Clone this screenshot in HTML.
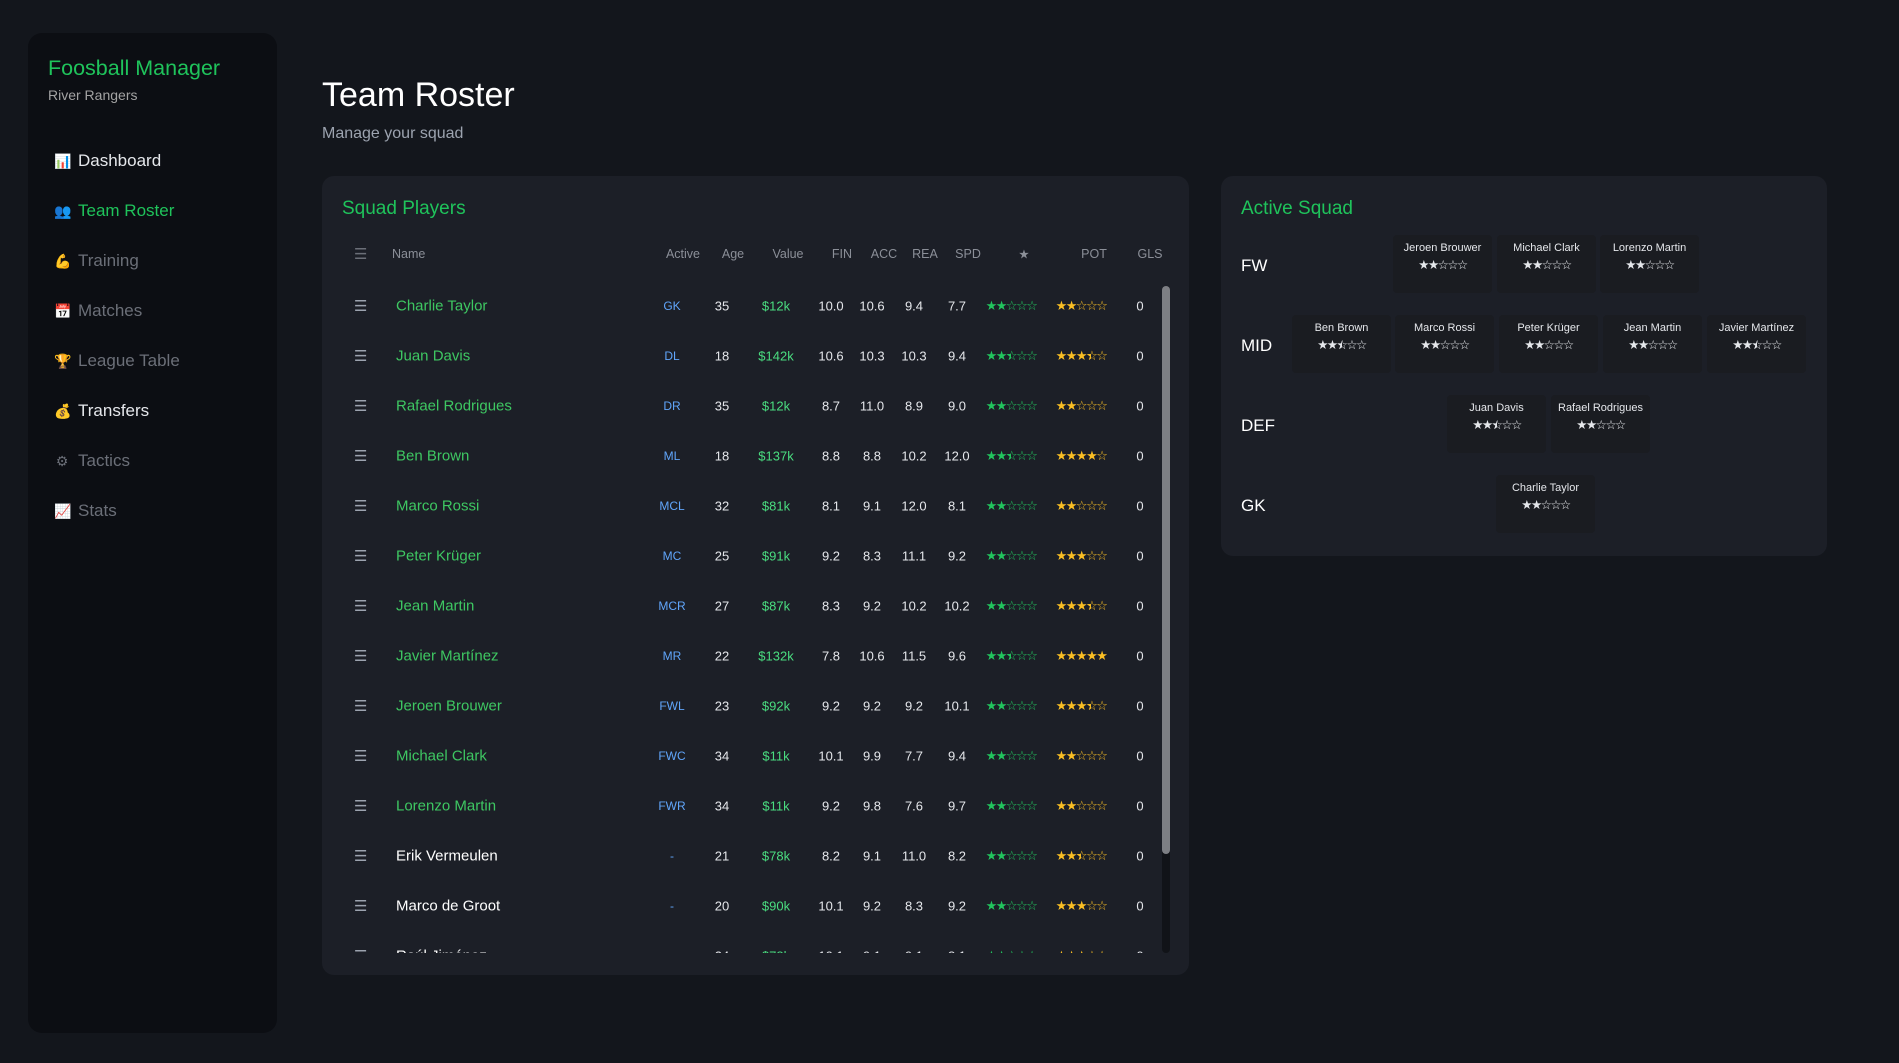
<!DOCTYPE html>
<html><head><meta charset="utf-8"><style>
*{margin:0;padding:0;box-sizing:border-box}
body{width:1899px;height:1063px;background:#13161c;font-family:"Liberation Sans","DejaVu Sans",sans-serif;color:#e5e7eb;position:relative;overflow:hidden}
.side{position:absolute;left:28px;top:33px;width:249px;height:1000px;background:#0c0e13;border-radius:14px}
.brand{position:absolute;left:20px;top:23px;font-size:21.5px;color:#1fc35b}
.team{position:absolute;left:20px;top:54px;font-size:14px;color:#a3a3a3}
.nav{position:absolute;left:26px;font-size:17px;color:#6b6f78;height:24px;line-height:24px}
.nav .ic{display:inline-block;width:16px;font-size:14px;margin-right:8px;text-align:center}
h1{position:absolute;left:322px;top:76px;font-size:34px;font-weight:normal;color:#fff}
.sub{position:absolute;left:322px;top:125px;font-size:16px;color:#9ca3af}
.panel{position:absolute;background:#1c1f27;border-radius:12px}
.ptitle{position:absolute;left:20px;top:22px;font-size:19px;color:#1fc35b}
.c{position:absolute;width:70px;margin-left:-35px;text-align:center;font-size:13px;color:#e5e7eb}
.hd .c{color:#8b8f98;font-size:12.5px}
.row{position:absolute;left:0;width:840px;height:50px}
.row .c,.hd .c{top:50%;transform:translateY(-50%)}
.nm{position:absolute;left:74px;top:50%;transform:translateY(-50%);font-size:15px;color:#3ec762}
.hb{position:absolute;left:32px;top:50%;transform:translateY(-50%);font-size:15px;color:#9ca3af}
.pos{color:#60a5fa!important;font-size:12px!important}
.val{color:#4ade80!important}
.g{color:#22c55e!important;font-size:13px!important;letter-spacing:-1.5px;width:80px!important;margin-left:-40px!important}
.y{color:#fbbf24!important;font-size:13px!important;letter-spacing:-1.5px;width:80px!important;margin-left:-40px!important}
.h{position:relative;display:inline-block}
.h::after{content:"★";position:absolute;left:0;top:0;width:50%;overflow:hidden}
.lbl{position:absolute;left:20px;font-size:17px;color:#fff}
.card{position:absolute;width:99px;height:58px;background:#1a1c21;border-radius:4px;text-align:center}
.card .n{font-size:11px;color:#e5e7eb;margin-top:7px}
.card .s{font-size:12.5px;color:#e5e7eb;margin-top:3px;letter-spacing:-1.5px}
</style></head><body>
<div class="side">
<div class="brand">Foosball Manager</div>
<div class="team">River Rangers</div>
<div class="nav" style="top:116px;color:#e5e7eb"><span class="ic">📊</span>Dashboard</div>
<div class="nav" style="top:166px;color:#1fc35b"><span class="ic">👥</span>Team Roster</div>
<div class="nav" style="top:216px"><span class="ic">💪</span>Training</div>
<div class="nav" style="top:266px"><span class="ic">📅</span>Matches</div>
<div class="nav" style="top:316px"><span class="ic">🏆</span>League Table</div>
<div class="nav" style="top:366px;color:#e5e7eb"><span class="ic">💰</span>Transfers</div>
<div class="nav" style="top:416px"><span class="ic">⚙</span>Tactics</div>
<div class="nav" style="top:466px"><span class="ic">📈</span>Stats</div>
</div>
<h1>Team Roster</h1>
<div class="sub">Manage your squad</div>

<div class="panel" style="left:322px;top:176px;width:867px;height:799px">
<div class="ptitle">Squad Players</div>
<div class="row hd" style="top:53px">
<span class="hb" style="color:#6b6f78">☰</span><span class="nm" style="left:70px;color:#8b8f98;font-size:12.5px">Name</span>
<span class="c" style="left:361px">Active</span><span class="c" style="left:411px">Age</span><span class="c" style="left:466px">Value</span><span class="c" style="left:520px">FIN</span><span class="c" style="left:562px">ACC</span><span class="c" style="left:603px">REA</span><span class="c" style="left:646px">SPD</span><span class="c" style="left:702px">★</span><span class="c" style="left:772px">POT</span><span class="c" style="left:828px">GLS</span>
</div>
<div style="position:absolute;left:0;top:105px;width:867px;height:672px;overflow:hidden" id="sc">
<div id="rows"></div>
</div>
<div style="position:absolute;left:840px;top:110px;width:8px;height:667px;background:#111318;border-radius:4px"></div>
<div style="position:absolute;left:840px;top:110px;width:8px;height:568px;background:#7d7f84;border-radius:4px"></div>
</div>

<div class="panel" style="left:1221px;top:176px;width:606px;height:380px">
<div class="ptitle">Active Squad</div>
<div class="lbl" style="top:80px">FW</div>
<div class="lbl" style="top:160px">MID</div>
<div class="lbl" style="top:240px">DEF</div>
<div class="lbl" style="top:320px">GK</div>
<div class="card" style="left:172px;top:59px"><div class="n">Jeroen Brouwer</div><div class="s">★★☆☆☆</div></div>
<div class="card" style="left:276px;top:59px"><div class="n">Michael Clark</div><div class="s">★★☆☆☆</div></div>
<div class="card" style="left:379px;top:59px"><div class="n">Lorenzo Martin</div><div class="s">★★☆☆☆</div></div>
<div class="card" style="left:71px;top:139px"><div class="n">Ben Brown</div><div class="s">★★<span class="h">☆</span>☆☆</div></div>
<div class="card" style="left:174px;top:139px"><div class="n">Marco Rossi</div><div class="s">★★☆☆☆</div></div>
<div class="card" style="left:278px;top:139px"><div class="n">Peter Krüger</div><div class="s">★★☆☆☆</div></div>
<div class="card" style="left:382px;top:139px"><div class="n">Jean Martin</div><div class="s">★★☆☆☆</div></div>
<div class="card" style="left:486px;top:139px"><div class="n">Javier Martínez</div><div class="s">★★<span class="h">☆</span>☆☆</div></div>
<div class="card" style="left:226px;top:219px"><div class="n">Juan Davis</div><div class="s">★★<span class="h">☆</span>☆☆</div></div>
<div class="card" style="left:330px;top:219px"><div class="n">Rafael Rodrigues</div><div class="s">★★☆☆☆</div></div>
<div class="card" style="left:275px;top:299px"><div class="n">Charlie Taylor</div><div class="s">★★☆☆☆</div></div>
</div>

<script>
var d=[["Charlie Taylor","GK",35,"$12k","10.0","10.6","9.4","7.7",2,2],
["Juan Davis","DL",18,"$142k","10.6","10.3","10.3","9.4",2.5,3.5],
["Rafael Rodrigues","DR",35,"$12k","8.7","11.0","8.9","9.0",2,2],
["Ben Brown","ML",18,"$137k","8.8","8.8","10.2","12.0",2.5,4],
["Marco Rossi","MCL",32,"$81k","8.1","9.1","12.0","8.1",2,2],
["Peter Krüger","MC",25,"$91k","9.2","8.3","11.1","9.2",2,3],
["Jean Martin","MCR",27,"$87k","8.3","9.2","10.2","10.2",2,3.5],
["Javier Martínez","MR",22,"$132k","7.8","10.6","11.5","9.6",2.5,5],
["Jeroen Brouwer","FWL",23,"$92k","9.2","9.2","9.2","10.1",2,3.5],
["Michael Clark","FWC",34,"$11k","10.1","9.9","7.7","9.4",2,2],
["Lorenzo Martin","FWR",34,"$11k","9.2","9.8","7.6","9.7",2,2],
["Erik Vermeulen","-",21,"$78k","8.2","9.1","11.0","8.2",2,2.5],
["Marco de Groot","-",20,"$90k","10.1","9.2","8.3","9.2",2,3],
["Raúl Jiménez","-",24,"$78k","10.1","9.1","9.1","8.1",2,3]];
function st(n){var s="";for(var i=1;i<=5;i++){if(n>=i)s+="★";else if(n>=i-0.5)s+='<span class="h">☆</span>';else s+="☆";}return s}
var h="";d.forEach(function(r,i){var act=r[1]!="-";
h+='<div class="row" style="top:'+(i*50)+'px"><span class="hb">☰</span><span class="nm" style="color:'+(act?'#3ec762':'#fff')+'">'+r[0]+'</span>'+
'<span class="c pos" style="left:350px">'+r[1]+'</span><span class="c" style="left:400px">'+r[2]+'</span><span class="c val" style="left:454px">'+r[3]+'</span>'+
'<span class="c" style="left:509px">'+r[4]+'</span><span class="c" style="left:550px">'+r[5]+'</span><span class="c" style="left:592px">'+r[6]+'</span><span class="c" style="left:635px">'+r[7]+'</span>'+
'<span class="c g" style="left:689px">'+st(r[8])+'</span><span class="c y" style="left:759px">'+st(r[9])+'</span><span class="c" style="left:818px">0</span></div>';});
document.getElementById("rows").innerHTML=h;
</script>
</body></html>
